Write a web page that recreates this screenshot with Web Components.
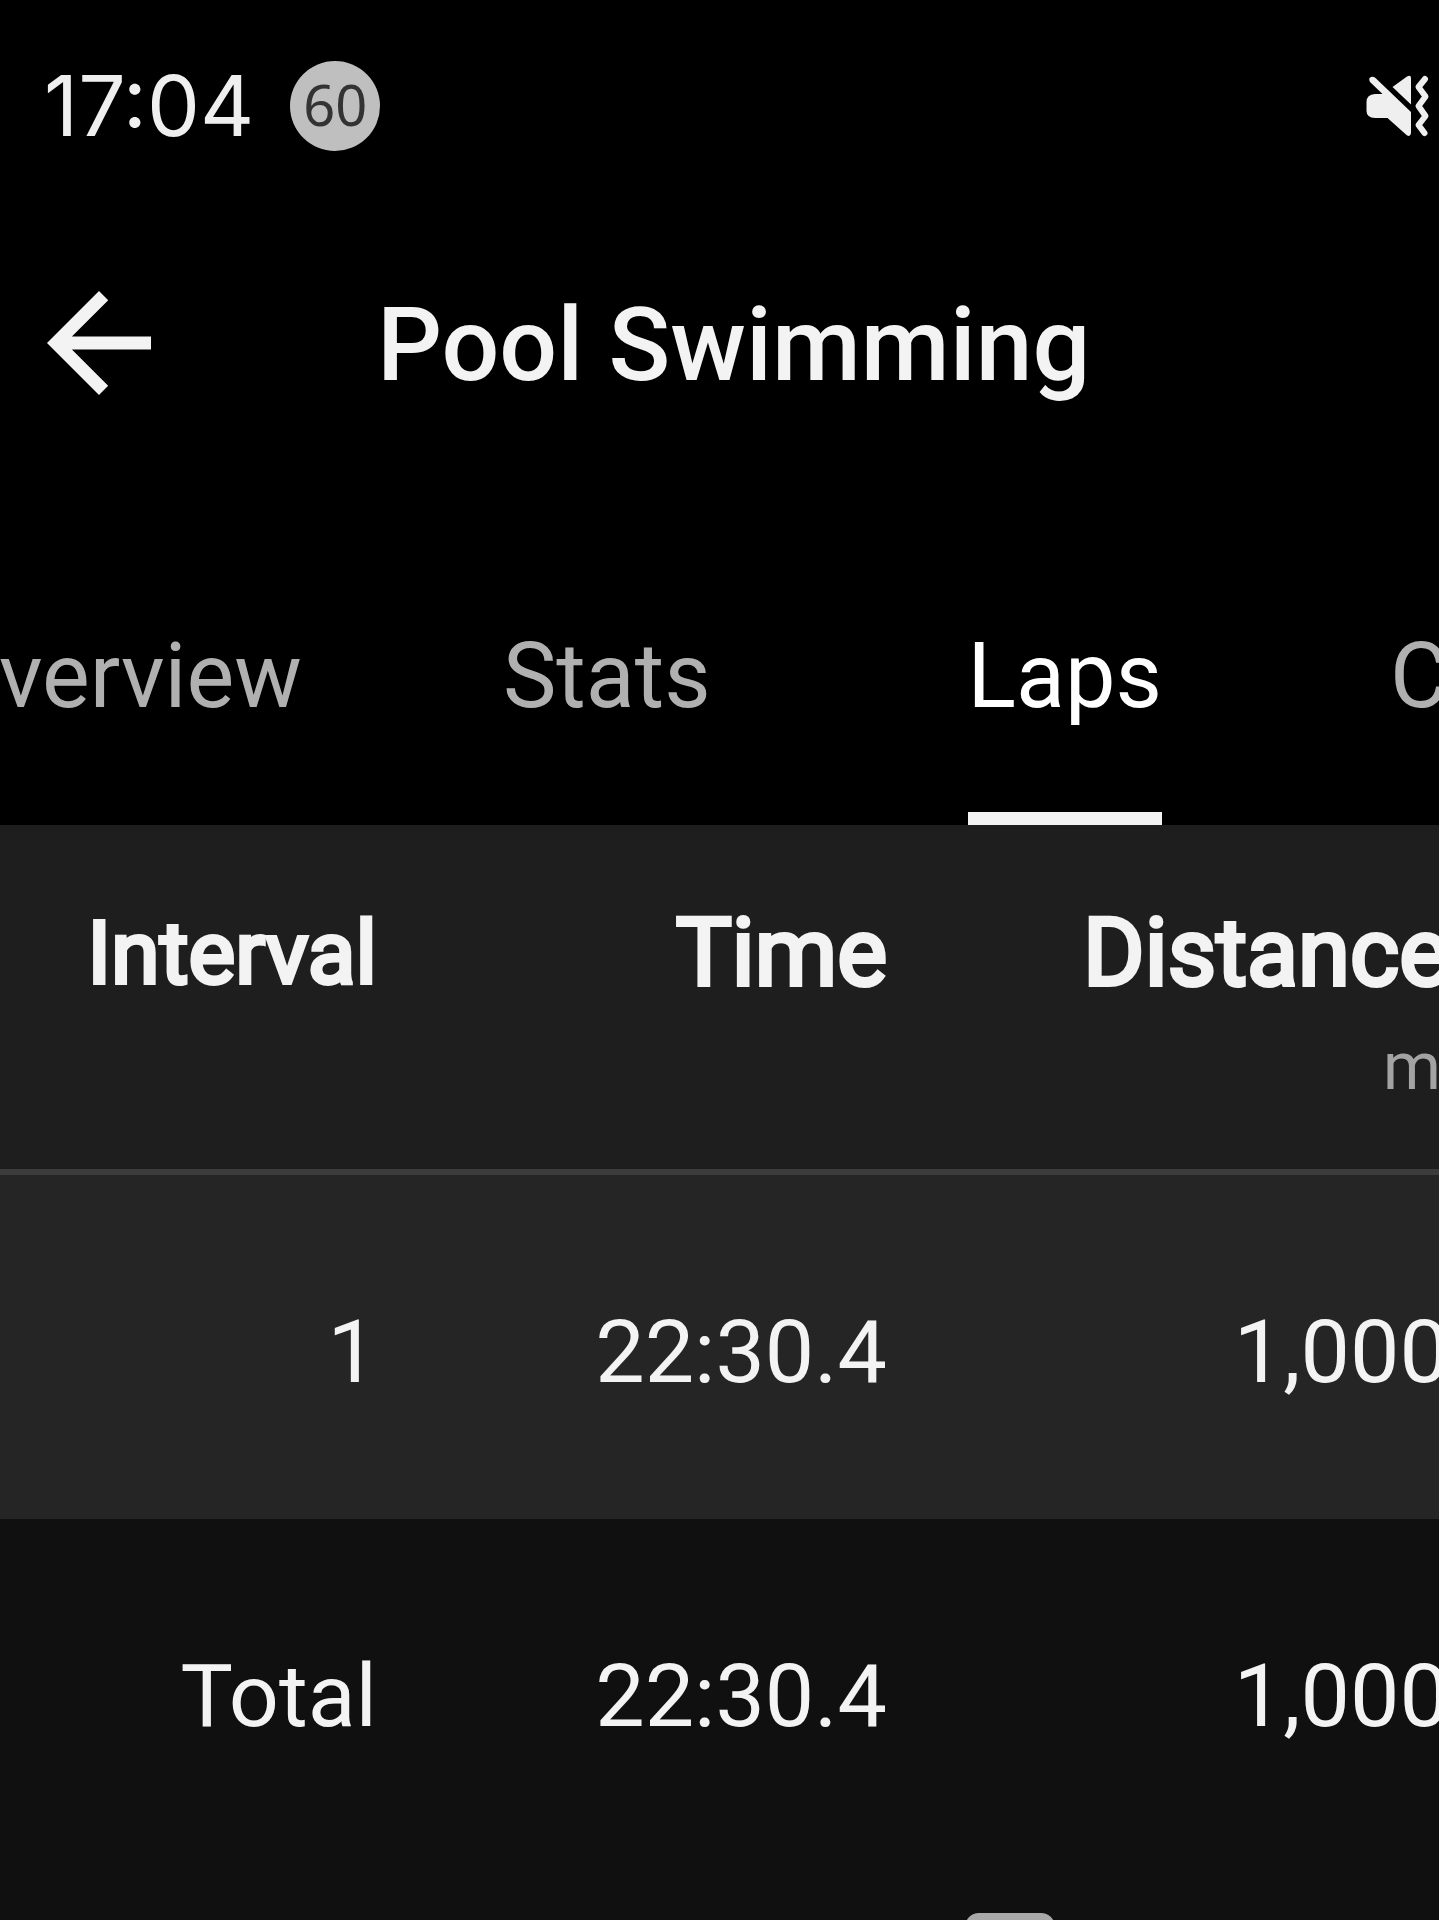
<!DOCTYPE html>
<html lang="en">
<head>
<meta charset="utf-8">
<meta name="viewport" content="width=device-width, initial-scale=1">
<title>Pool Swimming</title>
<style>
    body {
        margin: 0;
        background: #101010;
        color: #f3f3f3;
        font-family: Roboto, "Liberation Sans", sans-serif;
    }
</style>
</head>
<body>

<activity-screen>
    <status-bar slot="top" time="17:04" badge="60"></status-bar>
    <app-bar slot="top">Pool Swimming</app-bar>
    <tab-strip slot="top" tabs="Overview,Stats,Laps,Charts" selected="Laps" scroll="139"></tab-strip>
    <lap-table></lap-table>
    <nav-bar slot="bottom"></nav-bar>
</activity-screen>

<script>
/**
 * Activity details, "Laps" tab
 * Native Custom Elements, one shadow root each
 */

class ActivityScreen extends HTMLElement {
    connectedCallback() {
        this.attachShadow({ mode: 'open' }).innerHTML = `
            <style>
                :host {
                    display: flex;
                    flex-direction: column;
                    height: 100vh;
                    overflow: hidden;
                }

                header {
                    background: #000;
                }

                main {
                    min-width: 0;
                }

                footer {
                    flex: 1;
                    min-height: 0;
                    overflow: hidden;
                }
            </style>
            <header><slot name="top"></slot></header>
            <main><slot></slot></main>
            <footer><slot name="bottom"></slot></footer>
        `;
    }
}

class StatusBar extends HTMLElement {
    connectedCallback() {
        this.attachShadow({ mode: 'open' }).innerHTML = `
            <style>
                :host {
                    display: flex;
                    align-items: center;
                    gap: 36px;
                    height: 212px;
                    padding: 0 8px 0 44px;
                    color: #efefef;
                }

                .time {
                    font: 84px/96px Inter, Roboto, sans-serif;
                }

                .badge {
                    width: 90px;
                    height: 90px;
                    border-radius: 50%;
                    background: #bfbfbf;
                    color: #333;
                    font: 56px/86px "Noto Sans", sans-serif;
                    text-align: center;
                }

                svg {
                    width: 66px;
                    height: 66px;
                    margin-left: auto;
                }
            </style>
            <span class="time">${this.getAttribute('time')}</span>
            <span class="badge">${this.getAttribute('badge')}</span>
            <svg viewBox="0 0 66 66" role="img" aria-label="Vibrate, sound off">
                <path fill="currentColor" d="M27.500 14L42 3.500Q46 1.500 46 5V31.500Z"/>
                <path fill="currentColor" d="M5 9Q3 5 6 4Q8 3 10.500 5L46 39V60Q45.500 64.500 41.500 62L22.500 45H10Q1.500 44.500 1.500 38V29Q1.500 21.500 10 21H17.500Z"/>
                <path fill="none" stroke="currentColor" stroke-width="6" stroke-linecap="round" stroke-linejoin="round" d="M60 6L53.500 14L60.500 23.500L53.500 33L60.500 43L53.500 52L59.500 60"/>
            </svg>
        `;
    }
}

class AppBar extends HTMLElement {
    connectedCallback() {
        this.attachShadow({ mode: 'open' }).innerHTML = `
            <style>
                :host {
                    display: flex;
                    align-items: center;
                    gap: 200px;
                    height: 262px;
                    padding-left: 21px;
                }

                button {
                    display: flex;
                    padding: 0;
                    border: 0;
                    background: none;
                    color: inherit;
                    cursor: pointer;
                }

                svg {
                    width: 156px;
                    height: 156px;
                }

                h1 {
                    margin: 0;
                    padding-top: 4px;
                    font-size: 102px;
                    font-weight: 500;
                    line-height: 120px;
                    white-space: nowrap;
                }
            </style>
            <button type="button" aria-label="Back">
                <svg viewBox="0 0 24 24" aria-hidden="true">
                    <path fill="currentColor" d="M20 11H7.830l5.590-5.590L12 4l-8 8 8 8 1.410-1.410L7.830 13H20v-2z"/>
                </svg>
            </button>
            <h1><slot></slot></h1>
        `;
    }
}

class TabStrip extends HTMLElement {
    connectedCallback() {
        const selected = this.getAttribute('selected');
        const tabs = this.getAttribute('tabs').split(',');

        this.attachShadow({ mode: 'open' }).innerHTML = `
            <style>
                :host {
                    display: block;
                    padding-top: 55px;
                }

                .strip {
                    display: flex;
                    overflow-x: auto;
                    scrollbar-width: none;
                }

                button {
                    flex: none;
                    min-width: 458px;
                    padding: 0 76px;
                    border: 0;
                    background: none;
                    color: #b0b0b0;
                    font: 90px/296px Roboto, sans-serif;
                    cursor: pointer;
                }

                span {
                    display: inline-block;
                    height: 296px;
                }

                [aria-selected="true"] {
                    color: #fff;
                }

                [aria-selected="true"] span {
                    box-shadow: inset 0 -13px #f3f3f3;
                }
            </style>
            <div class="strip" role="tablist">
                ${tabs.map(tab => `<button type="button" role="tab" aria-selected="${tab === selected}"><span>${tab}</span></button>`).join('')}
            </div>
        `;

        this.shadowRoot.querySelector('.strip').scrollLeft = Number(this.getAttribute('scroll'));
        this.shadowRoot.querySelectorAll('button').forEach(button => {
            button.addEventListener('click', () => this.select(button));
        });
    }

    select(button) {
        this.shadowRoot.querySelectorAll('button').forEach(other => {
            other.setAttribute('aria-selected', other === button);
        });
    }
}

class LapTable extends HTMLElement {
    connectedCallback() {
        this.attachShadow({ mode: 'open' }).innerHTML = `
            <style>
                :host {
                    display: block;
                    overflow-x: auto;
                    scrollbar-width: none;
                }

                table {
                    table-layout: fixed;
                    width: 1449px;
                    min-width: 100%;
                    border-spacing: 0;
                    font-size: 88px;
                    line-height: 112px;
                    text-align: right;
                }

                .interval { width: 377px; }
                .time { width: 510px; }

                th, td {
                    box-sizing: border-box;
                    height: 344px;
                    padding: 10px 0 0;
                    font-weight: 400;
                    white-space: nowrap;
                }

                thead th {
                    height: 350px;
                    padding-top: 72px;
                    border-bottom: 6px solid #3c3c3c;
                    background: #1e1e1e;
                    vertical-align: top;
                    font-size: 94px;
                    -webkit-text-stroke: 4px;
                }

                thead th:first-child {
                    font-size: 88px;
                }

                small {
                    display: block;
                    padding-right: 8px;
                    color: #a3a3a3;
                    font-size: 66px;
                    line-height: 116px;
                    -webkit-text-stroke: 0;
                }

                tbody { background: #252525; }
                tfoot { background: #101010; }
            </style>
            <table>
                <colgroup>
                    <col class="interval">
                    <col class="time">
                    <col>
                </colgroup>
                <thead>
                    <tr>
                        <th scope="col">Interval</th>
                        <th scope="col">Time</th>
                        <th scope="col">Distance <small>m</small></th>
                    </tr>
                </thead>
                <tbody>
                    <tr><th scope="row">1</th><td>22:30.4</td><td>1,000</td></tr>
                </tbody>
                <tfoot>
                    <tr><th scope="row">Total</th><td>22:30.4</td><td>1,000</td></tr>
                </tfoot>
            </table>
        `;
    }
}

class NavBar extends HTMLElement {
    connectedCallback() {
        this.attachShadow({ mode: 'open' }).innerHTML = `
            <style>
                :host {
                    display: flex;
                    padding: 50px 0 50px 965px;
                }

                button {
                    width: 90px;
                    height: 90px;
                    border: 8px solid #a9a9a9;
                    border-radius: 14px;
                    background: none;
                    cursor: pointer;
                }
            </style>
            <button type="button" aria-label="Home"></button>
        `;
    }
}

customElements.define('activity-screen', ActivityScreen);
customElements.define('status-bar', StatusBar);
customElements.define('app-bar', AppBar);
customElements.define('tab-strip', TabStrip);
customElements.define('lap-table', LapTable);
customElements.define('nav-bar', NavBar);
</script>
</body>
</html>
